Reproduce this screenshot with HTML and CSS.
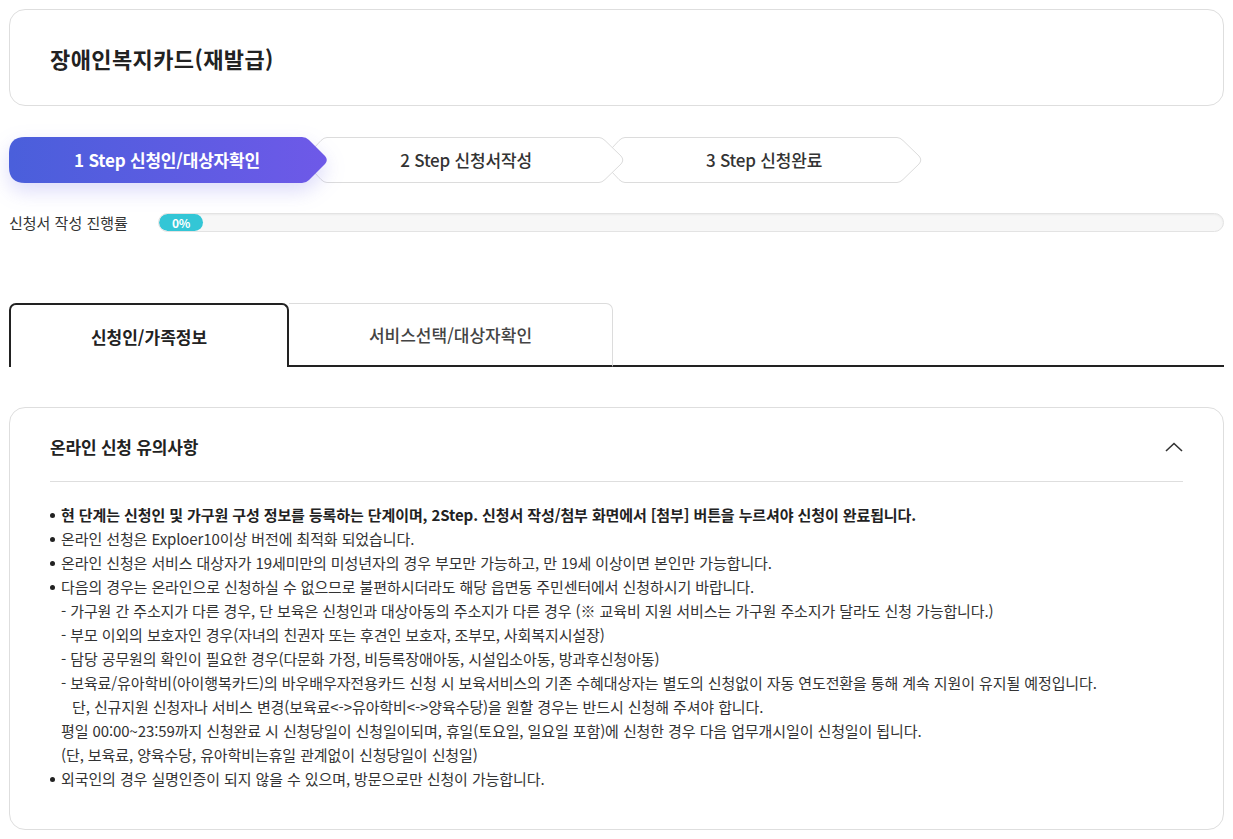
FILE: index.html
```html
<!DOCTYPE html>
<html lang="ko">
<head>
<meta charset="utf-8">
<title>장애인복지카드(재발급)</title>
<link rel="stylesheet" href="styles.css">
</head>
<body>
<div class="page">
  <header class="title-card">
    <h1 class="title">장애인복지카드(재발급)</h1>
  </header>

  <nav class="steps">
    <div class="step step-active">
      <svg class="step-bg" width="320" height="46" viewBox="0 0 320 46">
        <defs>
          <linearGradient id="g1" x1="0" y1="0" x2="1" y2="0">
            <stop offset="0" stop-color="#4a5fdb"/>
            <stop offset="1" stop-color="#6e59e8"/>
          </linearGradient>
        </defs>
        <path d="M16,0 H293 Q297,0 300,3 L316,19 Q319.5,23 316,27 L300,43 Q297,46 293,46 H16 Q0,46 0,30 V16 Q0,0 16,0 Z" fill="url(#g1)"/>
      </svg>
      <span class="step-label">1 Step 신청인/대상자확인</span>
    </div>
    <div class="step step-2">
      <svg class="step-bg" width="322" height="46" viewBox="0 0 322 46">
        <path d="M24,0.5 H296 Q299,0.5 302,3.5 L318,19 Q321.5,23 318,27 L302,42.5 Q299,45.5 296,45.5 H24 Q21,45.5 18,42.5 L3.5,27 Q0.5,23 3.5,19 L18,3.5 Q21,0.5 24,0.5 Z" fill="#fff" stroke="#dcdcdc" stroke-width="1"/>
      </svg>
      <span class="step-label">2 Step 신청서작성</span>
    </div>
    <div class="step step-3">
      <svg class="step-bg" width="322" height="46" viewBox="0 0 322 46">
        <path d="M24,0.5 H296 Q299,0.5 302,3.5 L318,19 Q321.5,23 318,27 L302,42.5 Q299,45.5 296,45.5 H24 Q21,45.5 18,42.5 L3.5,27 Q0.5,23 3.5,19 L18,3.5 Q21,0.5 24,0.5 Z" fill="none" stroke="#dcdcdc" stroke-width="1"/>
      </svg>
      <span class="step-label">3 Step 신청완료</span>
    </div>
  </nav>

  <div class="progress">
    <span class="progress-label">신청서 작성 진행률</span>
    <div class="progress-track">
      <div class="progress-fill">0%</div>
    </div>
  </div>

  <div class="tabs">
    <div class="tab tab-active">신청인/가족정보</div>
    <div class="tab">서비스선택/대상자확인</div>
    <div class="tab-rest"></div>
  </div>

  <section class="notice">
    <div class="notice-head">
      <h2 class="notice-title">온라인 신청 유의사항</h2>
      <svg class="chev" width="18" height="10" viewBox="0 0 18 10"><path d="M1,9 L9,1.5 L17,9" fill="none" stroke="#333" stroke-width="1.6"/></svg>
    </div>
    <ul class="notice-list">
      <li class="strong">현 단계는 신청인 및 가구원 구성 정보를 등록하는 단계이며, 2Step. 신청서 작성/첨부 화면에서 [첨부] 버튼을 누르셔야 신청이 완료됩니다.</li>
      <li>온라인 선청은 Exploer10이상 버전에 최적화 되었습니다.</li>
      <li>온라인 신청은 서비스 대상자가 19세미만의 미성년자의 경우 부모만 가능하고, 만 19세 이상이면 본인만 가능합니다.</li>
      <li>다음의 경우는 온라인으로 신청하실 수 없으므로 불편하시더라도 해당 읍면동 주민센터에서 신청하시기 바랍니다.
        <p class="sub">- 가구원 간 주소지가 다른 경우, 단 보육은 신청인과 대상아동의 주소지가 다른 경우 (※ 교육비 지원 서비스는 가구원 주소지가 달라도 신청 가능합니다.)</p>
        <p class="sub">- 부모 이외의 보호자인 경우(자녀의 친권자 또는 후견인 보호자, 조부모, 사회복지시설장)</p>
        <p class="sub">- 담당 공무원의 확인이 필요한 경우(다문화 가정, 비등록장애아동, 시설입소아동, 방과후신청아동)</p>
        <p class="sub">- 보육료/유아학비(아이행복카드)의 바우배우자전용카드 신청 시 보육서비스의 기존 수혜대상자는 별도의 신청없이 자동 연도전환을 통해 계속 지원이 유지될 예정입니다.</p>
        <p class="sub sub-indent">단, 신규지원 신청자나 서비스 변경(보육료&lt;-&gt;유아학비&lt;-&gt;양육수당)을 원할 경우는 반드시 신청해 주셔야 합니다.</p>
        <p class="sub">평일 00:00~23:59까지 신청완료 시 신청당일이 신청일이되며, 휴일(토요일, 일요일 포함)에 신청한 경우 다음 업무개시일이 신청일이 됩니다.</p>
        <p class="sub">(단, 보육료, 양육수당, 유아학비는휴일 관계없이 신청당일이 신청일)</p>
      </li>
      <li>외국인의 경우 실명인증이 되지 않을 수 있으며, 방문으로만 신청이 가능합니다.</li>
    </ul>
  </section>
</div>
</body>
</html>
```

FILE: styles.css
```css
* { box-sizing: border-box; }

html, body {
  margin: 0;
  padding: 0;
  background: #fff;
}

body {
  font-family: "Noto Sans CJK KR", "Noto Sans", sans-serif;
  color: #333;
}

.page {
  padding: 9px;
  display: flex;
  flex-direction: column;
}

.title-card {
  height: 97px;
  border: 1px solid #dedede;
  border-radius: 16px;
  display: flex;
  align-items: center;
  padding-left: 40px;
}

.title {
  margin: 0;
  font-size: 22px;
  font-weight: 700;
  color: #222;
  letter-spacing: 0.4px;
  line-height: 30px;
  position: relative;
  top: 0;
}

.steps {
  margin-top: 31px;
  display: flex;
  height: 46px;
}

.step {
  position: relative;
  height: 46px;
  display: flex;
  align-items: center;
  justify-content: center;
}

.step-bg {
  position: absolute;
  left: 0;
  top: 0;
}

.step-label {
  position: relative;
  font-size: 17px;
  font-weight: 500;
  color: #333;
  letter-spacing: -0.2px;
  line-height: 24px;
}

.step-active {
  width: 320px;
  z-index: 3;
}

.step-active .step-bg {
  filter: drop-shadow(0 8px 10px rgba(95, 90, 230, 0.22));
}

.step-active .step-label {
  color: #fff;
  font-weight: 700;
  padding-right: 4px;
}

.step-2 {
  width: 322px;
  margin-left: -26px;
  z-index: 2;
}

.step-3 {
  width: 322px;
  margin-left: -24px;
  z-index: 1;
}

.step-2 .step-label,
.step-3 .step-label {
  padding-left: 4px;
}

.progress {
  margin-top: 30px;
  display: flex;
  align-items: center;
  height: 19px;
}

.progress-label {
  width: 149px;
  font-size: 15px;
  color: #333;
  letter-spacing: 0;
  line-height: 20px;
}

.progress-track {
  flex: 1;
  height: 19px;
  border: 1px solid #e3e3e3;
  border-radius: 10px;
  background: #f7f7f7;
  box-shadow: inset 0 1px 2px rgba(0, 0, 0, 0.05);
  overflow: hidden;
  display: flex;
  align-items: center;
}

.progress-fill {
  width: 44px;
  height: 17px;
  border-radius: 9px;
  background: #33c6d6;
  color: #fff;
  font-size: 12px;
  font-weight: 700;
  line-height: 17px;
  text-align: center;
  letter-spacing: -0.3px;
}

.tabs {
  margin-top: 71px;
  display: flex;
  height: 64px;
}

.tab {
  display: flex;
  align-items: center;
  justify-content: center;
  font-size: 17px;
  letter-spacing: 0;
  line-height: 24px;
}

.tab-active {
  width: 280px;
  border: 2px solid #222;
  border-bottom: none;
  border-radius: 7px 7px 0 0;
  font-weight: 700;
  color: #222;
  padding-top: 2px;
}

.tab:not(.tab-active) {
  width: 324px;
  border: 1px solid #dcdcdc;
  border-bottom: 2px solid #222;
  border-left: none;
  border-radius: 0 7px 0 0;
  color: #444;
  font-weight: 500;
}

.tab-rest {
  flex: 1;
  border-bottom: 2px solid #222;
}

.notice {
  margin-top: 40px;
  border: 1px solid #dedede;
  border-radius: 16px;
  padding: 0 40px 38px 40px;
}

.notice-head {
  height: 74px;
  border-bottom: 1px solid #dedede;
  display: flex;
  align-items: center;
  justify-content: space-between;
  padding-top: 4px;
}

.notice-title {
  margin: 0;
  font-size: 17px;
  font-weight: 700;
  color: #222;
  letter-spacing: -0.2px;
  line-height: 26px;
}

.chev {
  margin-right: 0;
}

.notice-list {
  list-style: none;
  margin: 21px 0 0 0;
  padding: 0;
  font-size: 15px;
  line-height: 24px;
  color: #333;
  letter-spacing: -0.1px;
}

.notice-list > li {
  position: relative;
  padding-left: 11px;
}

.notice-list > li::before {
  content: "";
  position: absolute;
  left: 0;
  top: 10px;
  width: 5px;
  height: 5px;
  border-radius: 50%;
  background: #222;
}

.notice-list > li.strong {
  font-weight: 700;
  color: #222;
}

.sub {
  margin: 0;
}

.sub-indent {
  padding-left: 11px;
}
```
